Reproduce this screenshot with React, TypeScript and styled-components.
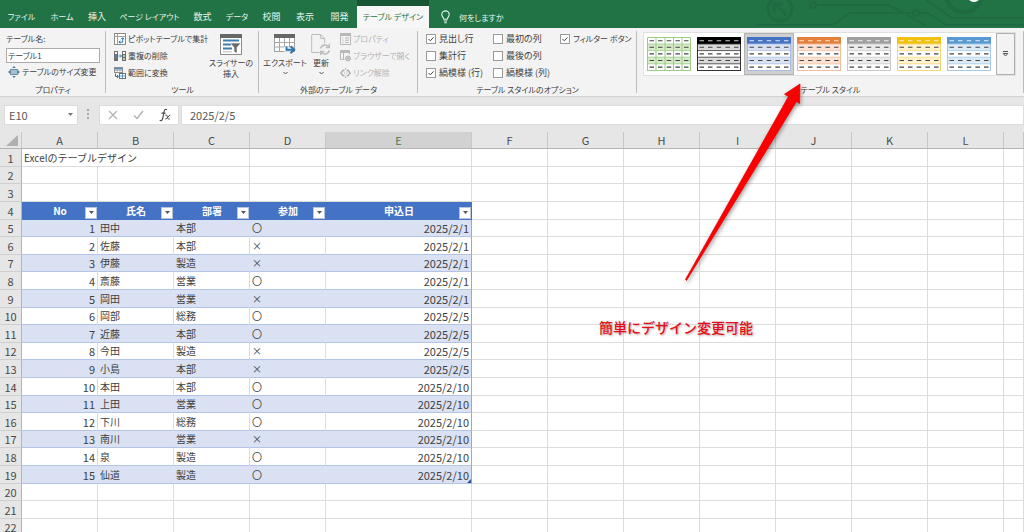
import React from "react";
import styled, { createGlobalStyle } from "styled-components";

const GlobalStyle = createGlobalStyle`
  * { box-sizing: border-box; }
  body {
    margin: 0;
    overflow: hidden;
    background: #fff;
    font-family: "Noto Sans CJK JP", "Noto Sans", sans-serif;
    color: #404040;
  }
  button, input { font: inherit; color: inherit; }
  button { border: 0; padding: 0; background: none; }
  svg { flex: none; }
`;

const Page = styled.div`
  position: relative;
  height: 100vh;
  overflow: hidden;
  display: flex;
  flex-direction: column;
`;

/* ---------- Title and tabs ---------- */

const TabBar = styled.header`
  position: relative;
  flex: none;
  height: 28px;
  padding-top: 6px;
  display: flex;
  background: #217346;
  font-feature-settings: "palt";
`;

const Tabs = styled.nav`
  display: flex;
`;

const Tab = styled.button<{ $width: number; $active?: boolean; $compact?: boolean }>`
  width: ${(p) => p.$width}px;
  height: 22px;
  font-size: ${(p) => (p.$compact ? 8 : 9)}px;
  line-height: 22px;
  white-space: nowrap;
  background: ${(p) => (p.$active ? "#f5f6f5" : "transparent")};
  color: ${(p) => (p.$active ? "#217346" : "#eaf4ee")};
  box-shadow: ${(p) => (p.$active ? "0 -6px 0 #185534" : "none")};
`;

const TellMe = styled.button`
  display: flex;
  align-items: center;
  gap: 8px;
  padding-left: 11px;
  font-size: 8px;
  color: #eaf4ee;
`;

const Circuit = styled.svg`
  position: absolute;
  right: 0;
  top: 0;
`;

/* ---------- Ribbon ---------- */

const Ribbon = styled.section`
  flex: none;
  display: flex;
  height: 69px;
  padding-top: 2px;
  background: #f3f3f3;
  border-bottom: 1px solid #d2d2d2;
  font-size: 8px;
  line-height: 12px;
  font-feature-settings: "palt";
`;

const Group = styled.div<{ $width?: number }>`
  flex: ${(p) => (p.$width ? `0 0 ${p.$width}px` : "1 1 0")};
  min-width: 0;
  display: flex;
  flex-direction: column;
  justify-content: space-between;
  background: linear-gradient(#bdbdbd, #bdbdbd) right 1px / 1px 62px no-repeat;
`;

const GroupBody = styled.div<{ $pad?: number }>`
  display: flex;
  padding-left: ${(p) => p.$pad ?? 8}px;
`;

const GroupLabel = styled.div`
  text-align: center;
  line-height: 12px;
`;

const Stack = styled.div<{ $width?: number; $pad?: number }>`
  display: flex;
  flex-direction: column;
  width: ${(p) => (p.$width ? `${p.$width}px` : "auto")};
  padding-left: ${(p) => p.$pad ?? 0}px;
`;

const NameLabel = styled.label`
  height: 18px;
  line-height: 17px;
`;

const NameInput = styled.input`
  width: 94px;
  height: 15px;
  padding: 0 1px;
  border: 1px solid #ababab;
  background: #fff;
`;

const Command = styled.button`
  display: flex;
  align-items: center;
  gap: 2px;
  height: 17px;
  white-space: nowrap;
  &:disabled { color: #b4b4b4; }
`;

const BigCommand = styled.button<{ $width: number }>`
  display: flex;
  flex-direction: column;
  align-items: center;
  width: ${(p) => p.$width}px;
  padding-top: 4px;
  line-height: 11px;
  white-space: nowrap;
  svg { margin-bottom: 2px; }
  span + svg { margin: 3px 0 0; }
`;

const Options = styled.div`
  display: grid;
  grid-template-columns: repeat(3, 67px);
  grid-auto-rows: 17px;
`;

const Option = styled.label<{ $compact: boolean }>`
  display: flex;
  align-items: center;
  gap: 3px;
  font-size: ${(p) => (p.$compact ? 8 : 9)}px;
  white-space: nowrap;
`;

const CheckInput = styled.input`
  appearance: none;
  flex: none;
  width: 10px;
  height: 10px;
  margin: 0;
  border: 1px solid #9a9a9a;
  background: #fff;
  &:checked {
    background: #fff
      url("data:image/svg+xml,%3Csvg xmlns='http://www.w3.org/2000/svg' viewBox='0 0 8 8'%3E%3Cpath d='M1.5 4l1.8 1.8L6.5 2.4' fill='none' stroke='%23444'/%3E%3C/svg%3E");
  }
`;

const Gallery = styled.div`
  display: flex;
  width: 373px;
  height: 44px;
  margin-top: 2px;
  background: #fff;
  border: 1px solid #e0e0e0;
`;

const StyleButton = styled.button<{ $selected?: boolean }>`
  display: flex;
  flex: 0 0 50px;
  justify-content: center;
  align-items: center;
  background: ${(p) => (p.$selected ? "#cfcfcf" : "transparent")};
  box-shadow: ${(p) => (p.$selected ? "inset 0 0 0 1px #b4b4b4" : "none")};
`;

const MoreButton = styled.button`
  flex: 1;
  margin-left: 2px;
  display: flex;
  align-items: center;
  justify-content: center;
  background: #f3f3f3;
  border: 1px solid #b0b0b0;
`;

/* ---------- Formula bar ---------- */

const FormulaBar = styled.section`
  flex: none;
  display: flex;
  align-items: center;
  height: 35px;
  padding: 0 0 0 4px;
  background: #e6e6e6;
  font-size: 11px;
  color: #595959;
`;

const NameBox = styled.label`
  display: flex;
  align-items: center;
  width: 74px;
  height: 20px;
  padding: 0 4px;
  background: #fff;
  border: 1px solid #dcdcdc;
`;

const BareInput = styled.input`
  flex: 1;
  min-width: 0;
  height: 18px;
  padding: 0;
  border: 0;
  outline: 0;
  background: transparent;
`;

const Grip = styled.svg`
  margin: 0 9px;
`;

const FxBox = styled.div`
  display: flex;
  align-items: center;
  justify-content: space-around;
  width: 80px;
  height: 20px;
  margin-right: 2px;
  background: #fff;
  border: 1px solid #dcdcdc;
`;

const FormulaBox = styled.div`
  flex: 1;
  display: flex;
  height: 20px;
  padding-left: 8px;
  background: #fff;
  border: 1px solid #dcdcdc;
`;

/* ---------- Sheet ---------- */

const Sheet = styled.table`
  width: 100%;
  table-layout: fixed;
  border-collapse: separate;
  border-spacing: 0;
  font-size: 10px;
  line-height: 16px;
  tbody tr { height: 18px; }
  tbody tr:nth-child(5n + 2), tbody tr:nth-child(5n) { height: 17px; }
`;

const ColHead = styled.th<{ $active?: boolean }>`
  height: 17px;
  padding: 0;
  font-size: 11px;
  font-weight: 400;
  color: ${(p) => (p.$active ? "#3c7a57" : "#4a4a4a")};
  background: ${(p) => (p.$active ? "#d2d2d2" : "#e6e6e6")};
  border-right: 1px solid #c8c8c8;
  border-bottom: 1px solid #b4b4b4;
`;

const CornerHead = styled(ColHead)`
  line-height: 0;
  text-align: right;
  vertical-align: bottom;
`;

const RowHead = styled.th`
  padding: 0;
  font-size: 11px;
  font-weight: 400;
  color: #4a4a4a;
  background: #e6e6e6;
  border-right: 1px solid #b4b4b4;
  border-bottom: 1px solid #cfcfcf;
`;

const Cell = styled.td`
  padding: 0 2px;
  white-space: nowrap;
  border-right: 1px solid #dcdcdc;
  border-bottom: 1px solid #dcdcdc;
`;

const FieldHead = styled.th`
  padding: 0;
  color: #fff;
  background: #4472c4;
  border-bottom: 1px solid #4472c4;
`;

const FieldInner = styled.div`
  display: grid;
  grid-template-columns: 13px 1fr 13px;
  align-items: end;
  height: 16px;
`;

const FieldName = styled.span`
  grid-column: 2;
`;

const FilterButton = styled.button`
  display: flex;
  align-items: center;
  justify-content: center;
  width: 12px;
  height: 12px;
  background: #fff;
  border: 1px solid #b8c4dc;
`;

const DataCell = styled(Cell)<{ $banded: boolean; $number?: boolean; $last?: boolean }>`
  position: relative;
  font-size: ${(p) => (p.$number ? 11 : 10)}px;
  text-align: ${(p) => (p.$number ? "right" : "left")};
  background: ${(p) => (p.$banded ? "#d9e1f2" : "#fff")};
  border-right-color: ${(p) => (p.$last ? "#8ea9db" : p.$banded ? "#d9e1f2" : "#dcdcdc")};
  border-bottom-color: #b4c4e6;
`;

const ResizeHandle = styled.span`
  position: absolute;
  right: 0;
  bottom: 0;
  border: 2px solid #2f4f9f;
  border-top-color: transparent;
  border-left-color: transparent;
`;

/* ---------- Annotation ---------- */

const Arrow = styled.svg`
  position: absolute;
  left: 676px;
  top: 80px;
  pointer-events: none;
`;

const Note = styled.div`
  position: absolute;
  left: 599px;
  top: 317px;
  font-size: 14px;
  line-height: 20px;
  font-weight: 500;
  color: #e3101c;
  text-shadow: 1px 1px 2px rgba(120, 60, 60, 0.5);
  white-space: nowrap;
`;

/* ---------- Icons ---------- */

const Chevron = () => (
  <svg width="7" height="5" viewBox="0 0 7 5">
    <path d="M1.5 1l2 2 2-2" fill="none" stroke="#555" />
  </svg>
);

const Caret = ({ color = "#555" }: { color?: string }) => (
  <svg width="5" height="3" viewBox="0 0 5 3">
    <path d="M0 0h5L2.5 3z" fill={color} />
  </svg>
);

const BulbIcon = () => (
  <svg width="11" height="14" viewBox="0 0 11 14" fill="none" stroke="#eaf4ee" strokeWidth="1.1">
    <path d="M3.8 9.2C3.8 7.6 1.8 7 1.8 4.6a3.7 3.7 0 0 1 7.4 0C9.2 7 7.2 7.6 7.2 9.2z" />
    <path d="M3.8 11h3.4M4.3 12.8h2.4" />
  </svg>
);

const ResizeIcon = () => (
  <svg width="14" height="12" viewBox="-2 0 14 12">
    <rect x="2.5" y="3.5" width="7" height="5" fill="#9cc3de" stroke="#7c8a94" />
    <path d="M6 0l1.8 2H4.2zM6 12l1.8-2H4.2zM0 6l2-1.8v3.6zM12 6l-2-1.8v3.6z" fill="#3f7fae" />
  </svg>
);

const PivotIcon = () => (
  <svg width="12" height="12" viewBox="0 0 12 12" fill="none">
    <rect x=".5" y=".5" width="11" height="11" fill="#fff" stroke="#8c8c8c" />
    <path d="M3.5 1v10M1 3.5h10" stroke="#a0a0a0" />
    <path d="M5 9.2h3.7V5M7.2 6.2L8.7 4.7l1.5 1.5M6.3 7.8L4.9 9.2l1.4 1.4" stroke="#2f75ad" />
  </svg>
);

const DuplicateIcon = () => (
  <svg width="12" height="12" viewBox="0 0 12 12">
    <path d="M0 1h4v10H0zM8 1h4v10H8z" fill="#6f6f6f" />
    <path d="M1 2h2v2H1zM9 2h2v2H9z" fill="#fff" />
    <path d="M1 5h2v2H1z" fill="#3f87bd" />
    <path d="M9 5h2v2H9zM9 8h2v2H9z" fill="#a9cfa9" />
    <path d="M4.5 6h3M6.3 4.6L7.7 6 6.3 7.4" fill="none" stroke="#3f87bd" />
  </svg>
);

const RangeIcon = () => (
  <svg width="12" height="12" viewBox="0 0 12 12" fill="none">
    <rect x=".5" y=".5" width="8" height="5" fill="#fff" stroke="#8c8c8c" />
    <path d="M1 1h7v1.5H1z" fill="#3f87bd" />
    <path d="M3.3 1v4M6 1v4M1 3.5h7" stroke="#a0a0a0" strokeWidth=".7" />
    <rect x="5.5" y="6.5" width="6" height="5" fill="#fff" stroke="#6f6f6f" />
    <path d="M8.5 7v4M6 9h5" stroke="#3f87bd" strokeWidth=".8" />
    <path d="M1.5 6.5v3h2.7M3 8l1.5 1.5L3 11" stroke="#2f75ad" />
  </svg>
);

const SlicerIcon = () => (
  <svg width="22" height="21" viewBox="0 0 22 21">
    <rect x=".5" y=".5" width="21" height="20" fill="#fff" stroke="#8c8c8c" />
    <path d="M0 0h22v4H0z" fill="#666" />
    <path d="M3 6.5h16M3 10.5h8M3 14.5h9" stroke="#3f7fb0" strokeWidth="2" />
    <path d="M3 17.8h9" stroke="#b8b8b8" />
    <path d="M10 9h11l-4 4.6v5.9l-3-2v-3.9z" fill="#6a6a6a" stroke="#fff" strokeWidth=".6" />
  </svg>
);

const ExportIcon = () => (
  <svg width="22" height="21" viewBox="0 0 22 21" fill="none">
    <rect x=".5" y=".5" width="20" height="17" fill="#fff" stroke="#a0a0a0" />
    <path d="M0 0h21v4H0z" fill="#666" />
    <path d="M5.5 4v13M10.5 4v13M15.5 4v13M1 8.5h19M1 13h19" stroke="#a8a8a8" />
    <path d="M12 13v2.5h6" stroke="#fff" strokeWidth="4" />
    <path d="M12.5 12.5v3.2h7M16.5 12.3l3.8 3.4-3.8 3.6" stroke="#2f75ad" strokeWidth="1.9" />
  </svg>
);

const RefreshIcon = () => (
  <svg width="20" height="21" viewBox="0 0 20 21" fill="none" stroke="#bdbdbd">
    <path d="M.7.5h9l4 4v5M.7.5v18h8M9.7.5v4h4" fill="none" />
    <circle cx="14" cy="15.5" r="6" fill="#f3f3f3" stroke="none" />
    <path d="M9.6 14.5a4.6 4.6 0 0 1 8-1.8M18.4 16.5a4.6 4.6 0 0 1-8 1.8" strokeWidth="1.7" />
    <path d="M18.3 9.8v3.6h-3.6M9.7 21v-3.6h3.6" strokeWidth="1.5" />
  </svg>
);

const PropertiesIcon = () => (
  <svg width="11" height="12" viewBox="0 0 11 12" fill="none" stroke="#b8b8b8">
    <rect x=".5" y=".5" width="10" height="11" />
    <path d="M1 2h9" strokeWidth="2" />
    <path d="M2.5 5h1M5 5h4M2.5 7.2h1M5 7.2h4M2.5 9.4h1M5 9.4h4" />
  </svg>
);

const BrowserIcon = () => (
  <svg width="11" height="12" viewBox="0 0 11 12" fill="none" stroke="#b8b8b8">
    <path d="M.5 9.5V.5h9v4M.5 9.5h4M3.5 3v6.5" />
    <path d="M1 2h8" strokeWidth="2" />
    <circle cx="8" cy="8.5" r="2.5" fill="#cfcfcf" />
    <path d="M5.5 8.5h5M8 6v5" strokeWidth=".7" />
  </svg>
);

const UnlinkIcon = () => (
  <svg width="11" height="12" viewBox="0 0 11 12" fill="none" stroke="#b0b0b0" strokeWidth="1.5">
    <path d="M4.5 3.5L3 3.3.9 6l2.1 2.7 1.5-.2M6.5 3.5L8 3.3 10.1 6 8 8.7l-1.5-.2" />
    <path d="M4 6h1M6.2 6h1M5.5 1v1.6M5.5 9.5V11" strokeWidth="1" />
  </svg>
);

const MoreIcon = () => (
  <svg width="7" height="8" viewBox="0 0 7 8" fill="none" stroke="#555">
    <path d="M1 1.5h5M1.2 3.5h4.6L3.5 6z" />
  </svg>
);

type Palette = { head: string; headDash: string; band: string; line: string; grid?: boolean };

const TableThumb = ({ head, headDash, band, line, grid }: Palette) => (
  <svg width="44" height="34" viewBox="0 0 44 34">
    <rect x=".5" y=".5" width="43" height="33" fill="#fff" stroke={line} />
    <path d="M1 7h42v6.6H1zM1 20.2h42v6.6H1z" fill={band} />
    <path d="M0 0h44v7H0z" fill={head} />
    <path d="M0 7h44M0 13.6h44M0 20.2h44M0 26.8h44" stroke={line} strokeWidth=".8" />
    {grid && <path d="M9 0v34M18 0v34M26.5 0v34M35 0v34M.5.5h43v33H.5z" stroke={line} fill="none" />}
    {[3.7, 10.3, 16.9, 23.5, 30.1].map((y, row) => (
      <path
        key={y}
        d={`M2.5 ${y}h4.500M11 ${y}h4.500M19.7 ${y}h4.500M28.4 ${y}h4.500M37 ${y}h4.500`}
        stroke={row === 0 ? headDash : "#444"}
        strokeWidth="1.1"
      />
    ))}
  </svg>
);

/* ---------- Data ---------- */

const tabs: { label: string; width: number; active?: boolean; compact?: boolean }[] = [
  { label: "ファイル", width: 43, compact: true },
  { label: "ホーム", width: 38, compact: true },
  { label: "挿入", width: 32 },
  { label: "ページ レイアウト", width: 73, compact: true },
  { label: "数式", width: 33 },
  { label: "データ", width: 36, compact: true },
  { label: "校閲", width: 33 },
  { label: "表示", width: 34 },
  { label: "開発", width: 35 },
  { label: "テーブル デザイン", width: 72, active: true, compact: true },
];

type OptionData = { label: string; checked?: boolean; compact?: boolean };

const options: OptionData[] = [
  { label: "見出し行", checked: true },
  { label: "最初の列" },
  { label: "フィルター ボタン", checked: true, compact: true },
  { label: "集計行" },
  { label: "最後の列" },
];

const stripeOptions: OptionData[] = [
  { label: "縞模様 (行)", checked: true },
  { label: "縞模様 (列)" },
];

const palettes: (Palette & { name: string })[] = [
  { name: "緑", head: "#fff", headDash: "#444", band: "#d5ebca", line: "#9ccb86", grid: true },
  { name: "黒", head: "#000", headDash: "#ccc", band: "#d9d9d9", line: "#333" },
  { name: "青", head: "#4472c4", headDash: "#dfe8f8", band: "#d9e1f2", line: "#a9bce3" },
  { name: "オレンジ", head: "#e5803a", headDash: "#fbe6d8", band: "#fbe2d5", line: "#f2bd9a" },
  { name: "灰", head: "#a0a0a0", headDash: "#eee", band: "#ebebeb", line: "#cacaca" },
  { name: "黄", head: "#f2c010", headDash: "#fff3c8", band: "#fff2cc", line: "#f5d978" },
  { name: "水色", head: "#5799d0", headDash: "#e3effa", band: "#dceaf6", line: "#a5c9e6" },
];

const columns = "ABCDEFGHIJKLM".split("");
const fields = ["No", "氏名", "部署", "参加", "申込日"];

const people: [string, string, string, string][] = [
  ["田中", "本部", "〇", "2025/2/1"],
  ["佐藤", "本部", "×", "2025/2/1"],
  ["伊藤", "製造", "×", "2025/2/1"],
  ["斎藤", "営業", "〇", "2025/2/1"],
  ["岡田", "営業", "×", "2025/2/1"],
  ["岡部", "総務", "〇", "2025/2/5"],
  ["近藤", "本部", "〇", "2025/2/5"],
  ["今田", "製造", "×", "2025/2/5"],
  ["小島", "本部", "×", "2025/2/5"],
  ["本田", "本部", "〇", "2025/2/10"],
  ["上田", "営業", "〇", "2025/2/10"],
  ["下川", "総務", "〇", "2025/2/10"],
  ["南川", "営業", "×", "2025/2/10"],
  ["泉", "製造", "〇", "2025/2/10"],
  ["仙道", "製造", "〇", "2025/2/10"],
];

const emptyCells = (count: number) => Array.from({ length: count }, (_, i) => <Cell key={`e${i}`} />);

const Check = ({ label, checked = false, compact = false }: OptionData) => (
  <Option $compact={compact}>
    <CheckInput type="checkbox" defaultChecked={checked} />
    {label}
  </Option>
);

const SheetRow = ({ n }: { n: number }) => {
  if (n === 1) {
    return (
      <tr>
        <RowHead scope="row">1</RowHead>
        <Cell colSpan={2}>Excelのテーブルデザイン</Cell>
        {emptyCells(11)}
      </tr>
    );
  }
  if (n === 4) {
    return (
      <tr>
        <RowHead scope="row">4</RowHead>
        {fields.map((f) => (
          <FieldHead key={f} scope="col">
            <FieldInner>
              <FieldName>{f}</FieldName>
              <FilterButton aria-label={`${f}のフィルター`}>
                <Caret />
              </FilterButton>
            </FieldInner>
          </FieldHead>
        ))}
        {emptyCells(8)}
      </tr>
    );
  }
  const person = people[n - 5];
  if (!person) {
    return (
      <tr>
        <RowHead scope="row">{n}</RowHead>
        {emptyCells(13)}
      </tr>
    );
  }
  const banded = n % 2 === 1;
  const [name, dept, joined, date] = person;
  return (
    <tr>
      <RowHead scope="row">{n}</RowHead>
      <DataCell $banded={banded} $number>{n - 4}</DataCell>
      <DataCell $banded={banded}>{name}</DataCell>
      <DataCell $banded={banded}>{dept}</DataCell>
      <DataCell $banded={banded}>{joined}</DataCell>
      <DataCell $banded={banded} $number $last>
        {date}
        {n === 19 && <ResizeHandle />}
      </DataCell>
      {emptyCells(8)}
    </tr>
  );
};

export default function App() {
  return (
    <Page>
      <GlobalStyle />
      <TabBar>
        <Circuit width="274" height="28" viewBox="0 0 274 28" fill="none" stroke="#1f6a41" strokeWidth="2">
          <circle cx="30" cy="9" r="12" strokeWidth="3" />
          <path d="M36 15l-11-11M24 13V4h9" strokeWidth="3" />
          <circle cx="63" cy="5" r="3" />
          <path d="M67 5h71l14 7 24 14M6 25h76l18-12h62M170 13h8l18 12h78M176 0l26 18h72" />
          <circle cx="166" cy="13" r="3" />
          <circle cx="214" cy="-6" r="18" strokeWidth="4" />
          <ellipse cx="224" cy="-1" rx="5" ry="3" fill="#f4f8f5" stroke="none" />
        </Circuit>
        <Tabs>
          {tabs.map((t) => (
            <Tab key={t.label} $width={t.width} $active={t.active} $compact={t.compact}>{t.label}</Tab>
          ))}
        </Tabs>
        <TellMe>
          <BulbIcon />
          何をしますか
        </TellMe>
      </TabBar>

      <Ribbon>
        <Group $width={106}>
          <GroupBody $pad={6}>
            <Stack>
              <NameLabel htmlFor="table-name">テーブル名:</NameLabel>
              <NameInput id="table-name" defaultValue="テーブル1" />
              <Command><ResizeIcon />テーブルのサイズ変更</Command>
            </Stack>
          </GroupBody>
          <GroupLabel>プロパティ</GroupLabel>
        </Group>
        <Group $width={153}>
          <GroupBody>
            <Stack $width={94}>
              <Command><PivotIcon />ピボットテーブルで集計</Command>
              <Command><DuplicateIcon />重複の削除</Command>
              <Command><RangeIcon />範囲に変換</Command>
            </Stack>
            <BigCommand $width={46}>
              <SlicerIcon />
              <span>スライサーの<br />挿入</span>
            </BigCommand>
          </GroupBody>
          <GroupLabel>ツール</GroupLabel>
        </Group>
        <Group $width={159}>
          <GroupBody $pad={4}>
            <BigCommand $width={44}>
              <ExportIcon />
              <span>エクスポート</span>
              <Chevron />
            </BigCommand>
            <BigCommand $width={28}>
              <RefreshIcon />
              <span>更新</span>
              <Chevron />
            </BigCommand>
            <Stack $pad={5}>
              <Command disabled><PropertiesIcon />プロパティ</Command>
              <Command disabled><BrowserIcon />ブラウザーで開く</Command>
              <Command disabled><UnlinkIcon />リンク解除</Command>
            </Stack>
          </GroupBody>
          <GroupLabel>外部のテーブル データ</GroupLabel>
        </Group>
        <Group $width={219}>
          <GroupBody>
            <Options>
              {options.map((o) => <Check key={o.label} {...o} />)}
              <span />
              {stripeOptions.map((o) => <Check key={o.label} {...o} />)}
            </Options>
          </GroupBody>
          <GroupLabel>テーブル スタイルのオプション</GroupLabel>
        </Group>
        <Group>
          <GroupBody $pad={6}>
            <Gallery>
              {palettes.map((p) => (
                <StyleButton key={p.name} aria-label={p.name} $selected={p.name === "青"}>
                  <TableThumb {...p} />
                </StyleButton>
              ))}
              <MoreButton aria-label="その他"><MoreIcon /></MoreButton>
            </Gallery>
          </GroupBody>
          <GroupLabel>テーブル スタイル</GroupLabel>
        </Group>
      </Ribbon>

      <FormulaBar>
        <NameBox>
          <BareInput aria-label="名前ボックス" defaultValue="E10" />
          <Caret color="#777" />
        </NameBox>
        <Grip width="3" height="11" viewBox="0 0 3 11" fill="#a8a8a8">
          <path d="M0 0h2v2H0zM0 4h2v2H0zM0 8h2v2H0z" />
        </Grip>
        <FxBox>
          <svg width="10" height="10" viewBox="0 0 10 10" fill="none" stroke="#b4b4b4" strokeWidth="1.3">
            <path d="M1 1l8 8M9 1L1 9" />
          </svg>
          <svg width="11" height="10" viewBox="0 0 11 10" fill="none" stroke="#b4b4b4" strokeWidth="1.5">
            <path d="M1 5.5L4 8.5 10 1" />
          </svg>
          <svg width="12" height="14" viewBox="0 0 12 14" fill="none" stroke="#4a4a4a" strokeWidth="1.2">
            <path d="M8 1.8C6.500.6 5.500 1.500 5.100 3.500L3.700 10.500C3.300 12.500 2 13 .7 12.200M2.500 5.200h4" />
            <path d="M6.300 7.200c1.500-.6 1.800.3 2.200 2s.8 2.500 2.300 1.600M11.300 7C9.500 7 8.500 11.300 6.200 11" strokeWidth="1" />
          </svg>
        </FxBox>
        <FormulaBox>
          <BareInput aria-label="数式バー" defaultValue="2025/2/5" />
        </FormulaBox>
      </FormulaBar>

      <Sheet>
        <colgroup>
          <col style={{ width: 22 }} />
          {columns.map((c) => (
            <col key={c} style={{ width: c === "M" ? "auto" : c === "E" ? 146 : 76 }} />
          ))}
        </colgroup>
        <thead>
          <tr>
            <CornerHead>
              <svg width="15" height="13" viewBox="0 0 15 13">
                <path d="M12 0v11H0z" fill="#b0b0b0" />
              </svg>
            </CornerHead>
            {columns.map((c) => (
              <ColHead key={c} scope="col" $active={c === "E"}>{c === "M" ? "" : c}</ColHead>
            ))}
          </tr>
        </thead>
        <tbody>
          {Array.from({ length: 22 }, (_, i) => <SheetRow key={i} n={i + 1} />)}
        </tbody>
      </Sheet>

      <Arrow width="134" height="212" viewBox="0 0 134 212">
        <defs>
          <filter id="arrow-shadow" x="-20%" y="-20%" width="140%" height="140%">
            <feDropShadow dx="1" dy="2" stdDeviation="2" floodColor="#000" floodOpacity=".4" />
          </filter>
        </defs>
        <path
          d="M124 4L123.500 23.500 120.500 21.500 10.500 200.500 9.500 199.500 112.500 16.500 108.500 14.200z"
          fill="#fb0505"
          stroke="#d00"
          strokeWidth=".7"
          filter="url(#arrow-shadow)"
        />
      </Arrow>
      <Note>簡単にデザイン変更可能</Note>
    </Page>
  );
}
